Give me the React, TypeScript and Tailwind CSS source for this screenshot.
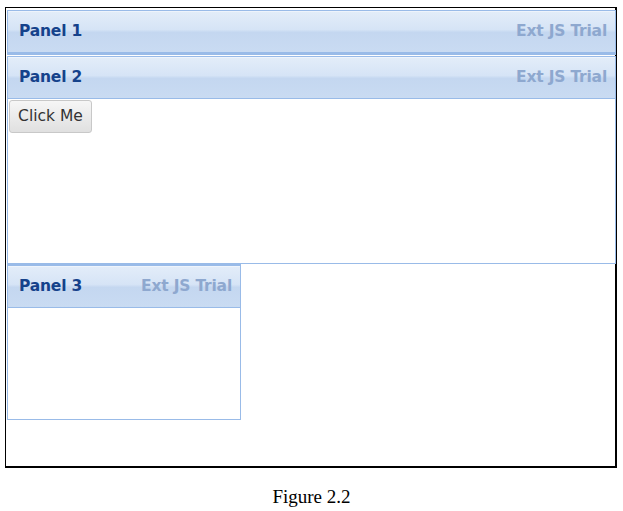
import React from "react";

function Header({ title }: { title: string }) {
  return (
    <div className="relative h-[42px] flex items-center justify-between pl-[11px] pr-[8px] pt-[1px] border-b border-[#99bbe8] bg-[linear-gradient(to_bottom,#e3edf9_0%,#d6e4f6_45%,#c4d7f0_52%,#c9dbf2_100%)] shadow-[inset_0_1px_0_#eef4fc]">
      <span className="text-[15.5px] font-bold text-[#15428b] font-['DejaVu_Sans',sans-serif] leading-none tracking-[-0.2px]">{title}</span>
      <span className="text-[15.5px] font-bold text-[#8ea8cf] font-['DejaVu_Sans',sans-serif] leading-none tracking-[-0.2px]">Ext JS Trial</span>
    </div>
  );
}

export default function App() {
  return (
    <div className="w-[623px] h-[511px] bg-white overflow-hidden">
      <div className="ml-[5px] mt-[7px] w-[612px] h-[461px] border border-black border-r-2 border-b-2 pt-[2px] pl-[1px] flex flex-col">
        <div className="w-[609px] border border-[#99bbe8] border-b-2">
          <Header title="Panel 1" />
        </div>
        <div className="w-[609px] border border-[#99bbe8] mt-[1px]">
          <Header title="Panel 2" />
          <div className="h-[164px] bg-white pt-[1px] pl-[1px]">
            <button className="w-[83px] h-[33px] rounded-[3px] border border-[#c8c8c8] bg-[linear-gradient(to_bottom,#f6f6f6,#e0e0e0)] text-[15.5px] text-[#333] font-['DejaVu_Sans',sans-serif] flex items-center justify-center">
              Click Me
            </button>
          </div>
        </div>
        <div className="w-[234px] border border-[#99bbe8] border-t-2">
          <Header title="Panel 3" />
          <div className="h-[111px] bg-white" />
        </div>
      </div>
      <div className="mt-[19px] text-center text-[19px] text-black font-['Liberation_Serif',serif] leading-none">
        Figure 2.2
      </div>
    </div>
  );
}
